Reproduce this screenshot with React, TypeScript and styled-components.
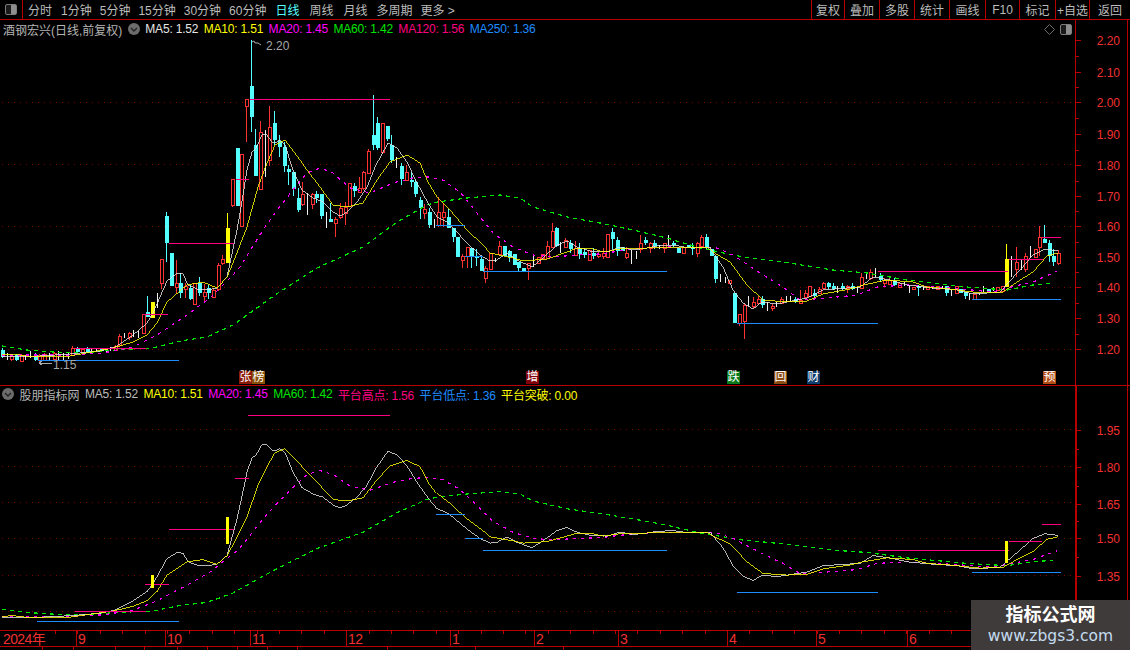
import React, {FC} from 'react';
import styled, {createGlobalStyle} from 'styled-components';

const RED = '#b80000';
const AXIS_RED = '#ff3232';
const FONT = '"Liberation Sans", "Noto Sans CJK SC", sans-serif';

const MA5 = '#e6e6e6';
const MA10 = '#ffff00';
const MA20 = '#ff00ff';
const MA60 = '#00e600';
const PINK = '#ff0080';
const BLUE = '#1e8cff';
const CYAN = '#54ffff';

type Kind = 'c' | 'r' | 'w' | 'y';
// x, kind, body top, body bottom, wick top, wick bottom (page pixels of the upper pane)
type Candle = [number, Kind, number, number, number?, number?];
type Pt = [number, number];

const candles: Candle[] = [
    [2,'c',350,357,348,358],[7,'w',353,360],[11,'r',356,359,355,361],[16,'c',355,360,354,361],[21,'r',355,361,354,362],
    [25,'w',355,360],[30,'w',351,358],[35,'c',355,360,353,361],[39,'r',355,360,354,362],[44,'r',354,360,353,361],
    [49,'w',353,360],[54,'r',353,359,352,360],[58,'w',351,360],[63,'w',353,360],[68,'w',353,359],[72,'r',348,355,346,356],
    [77,'c',348,352,347,353],[82,'r',349,352,348,353],[87,'c',348,352,347,353],[91,'w',348,352],[96,'w',348,352],
    [101,'c',349,351],[106,'w',348,352],[110,'w',347,351],[115,'r',346,350,345,351],[119,'r',336,345,334,346],
    [124,'w',333,338],[129,'r',333,337,332,340],[133,'w',330,337],[138,'w',331,338],[143,'r',314,333],
    [147,'c',312,317,296,317],[152,'y',302,318],[157,'w',293,308],[161,'r',259,283,259,289],[166,'c',216,243,212,262],
    [171,'c',253,286],[176,'r',283,287,260,293],[180,'c',283,293,273,298],[185,'r',286,289,283,298],[190,'c',288,299,285,300],
    [194,'r',283,304],[199,'c',283,293,277,296],[204,'r',292,296,284,302],[208,'c',288,293,285,299],[213,'r',290,297,288,298],
    [218,'r',265,289,263,291],[222,'r',259,263,255,265],[227,'y',228,263,213,263],[232,'r',179,205,179,207],[237,'c',148,206],
    [241,'r',154,226],[246,'r',99,106,99,142],[251,'c',86,117,40,132],[255,'c',145,176,129,176],[260,'r',132,189,121,189],
    [265,'w',130,177],[269,'r',127,160,106,166],[274,'c',123,140,111,145],[279,'c',141,147,135,157],[284,'c',147,166,142,172],
    [288,'c',169,172,165,185],[293,'c',172,189,172,196],[298,'c',198,210,188,212],[302,'r',194,204,182,206],[307,'w',193,215],
    [312,'r',194,204,193,209],[316,'c',194,198,191,203],[321,'c',194,216,194,219],[326,'w',212,228],[330,'c',219,222,203,222],
    [335,'r',219,223,217,237],[340,'r',208,217,203,219],[345,'r',207,213,202,225],[349,'r',183,206],[354,'c',186,191,183,197],
    [359,'r',188,192,177,193],[363,'r',172,188,171,190],[368,'r',151,173,149,173],[373,'c',135,145,95,150],[377,'c',123,148,117,150],
    [382,'r',123,152,123,154],[387,'c',126,139,126,141],[391,'c',145,160,135,163],[396,'w',157,168],[401,'c',166,179,163,185],
    [406,'r',172,180,165,181],[411,'c',180,182,172,187],[415,'c',182,194,179,197],[420,'c',200,208,197,219],[424,'r',209,213,204,219],
    [429,'c',212,225,208,228],[434,'w',219,228],[438,'r',212,225,197,227],[443,'r',212,217,203,227],[448,'c',217,228,209,228],
    [453,'c',228,237,228,242],[457,'c',237,257],[462,'r',256,260,254,268],[467,'r',247,256,247,268],[471,'c',248,257,248,268],
    [476,'c',257,258,249,266],[481,'c',259,271,257,271],[485,'r',268,278,266,283],[490,'r',253,269],[495,'w',258,262],
    [499,'r',246,254,241,256],[504,'c',246,256],[509,'c',251,257,250,262],[514,'c',254,265],[518,'c',262,268,262,271],
    [523,'c',268,271],[528,'r',263,268,263,280],[533,'w',254,267],[538,'r',257,263],[542,'r',254,258],[547,'r',246,258,241,258],
    [552,'r',231,247,223,247],[556,'c',228,246,227,247],[560,'w',242,253],[565,'r',240,247,238,248],[570,'c',243,249,240,253],
    [575,'r',248,255,241,255],[579,'c',248,254,243,259],[584,'c',252,255,248,258],[589,'r',250,260],[593,'c',253,256,248,259],
    [598,'r',254,256,252,258],[603,'r',253,256,248,259],[607,'r',234,257],[612,'c',232,239,228,249],[617,'c',240,251,237,256],
    [622,'c',247,251],[626,'r',253,257,247,259],[631,'w',250,264],[636,'w',251,259],[640,'r',243,249,235,253],[645,'c',240,243,237,245],
    [650,'r',243,248,242,253],[654,'c',243,246,240,249],[659,'w',245,249],[664,'r',243,248,243,253],[668,'w',235,245],
    [673,'c',243,245,241,247],[678,'c',248,253],[683,'r',247,253],[688,'c',245,248],[692,'c',247,249,243,255],[697,'r',243,253,242,257],
    [701,'r',237,246,235,248],[706,'c',237,247,234,250],[711,'c',249,256],[715,'c',256,279,256,283],[720,'w',274,282],[725,'w',277,283],
    [729,'r',280,283],[734,'c',293,323],[739,'r',314,323,314,326],[744,'r',305,321,303,339],[748,'w',296,306],[753,'r',302,306,297,308],
    [758,'r',299,303,296,305],[762,'c',299,305,296,308],[767,'w',302,311],[772,'r',306,308,304,311],[776,'w',302,307],[781,'r',299,303,297,304],
    [786,'w',296,302],[790,'w',296,302],[795,'c',299,302,297,303],[800,'r',300,303,290,304],[805,'r',293,297,290,298],[809,'r',286,296],
    [814,'c',293,296,289,298],[819,'r',289,293,287,294],[823,'r',283,288,282,289],[828,'c',283,287,282,289],[833,'c',286,289,283,290],
    [837,'w',286,293],[842,'c',286,289,283,290],[847,'r',286,288,285,293],[852,'c',286,289,283,290],[857,'w',287,293],[861,'r',277,288,273,289],
    [866,'w',272,279],[870,'r',272,278,269,280],[875,'w',268,277],[880,'c',276,280,273,282],[884,'r',280,283,278,286],[889,'r',280,284,277,285],
    [894,'c',281,285,278,286],[899,'r',283,287,282,288],[904,'w',282,286],[909,'w',286,293],[913,'r',287,289],[918,'c',286,288,285,296],
    [923,'w',287,290],[927,'r',286,289],[932,'w',286,289],[937,'r',286,289],[942,'w',286,289],[946,'c',286,293,286,296],[951,'w',289,296],
    [956,'r',286,293],[960,'c',289,293],[965,'c',292,296,292,299],[969,'w',293,300],[974,'r',294,299],[979,'w',293,295],[983,'w',286,292],
    [988,'c',289,293],[993,'w',287,291],[997,'r',287,290],[1002,'r',286,291],[1006,'y',259,287,244,287],[1011,'w',256,277],[1016,'r',262,269,247,277],
    [1021,'w',260,270],[1025,'r',256,269,253,272],[1030,'w',246,258],[1035,'r',249,257],[1039,'r',237,247,226,256],[1044,'c',239,243,225,243],
    [1049,'c',243,256,240,262],[1053,'c',256,262,249,266],[1058,'r',253,263,250,265],
];

const ma5Line: Pt[] = [[2,357],[40,356],[70,354],[100,351],[115,347],[133,335],[147,323],[153,313],[160,297],[167,281],[177,273],[183,274],[188,285],[197,289],[207,290],[217,288],[227,277],[230,263],[237,230],[241,207],[247,170],[252,152],[256,148],[262,135],[266,134],[272,142],[275,143],[280,140],[285,145],[293,170],[302,190],[313,198],[323,202],[333,212],[340,216],[347,212],[357,202],[367,187],[375,167],[388,143],[397,148],[407,162],[417,183],[428,203],[437,217],[447,222],[455,230],[467,243],[480,255],[490,261],[497,260],[507,253],[517,260],[532,267],[543,258],[557,245],[567,241],[577,247],[590,251],[607,252],[620,247],[633,250],[647,248],[657,246],[673,245],[690,248],[710,247],[713,252],[723,267],[733,290],[743,303],[753,309],[762,302],[777,304],[787,302],[807,298],[823,290],[847,288],[860,287],[873,277],[890,280],[907,285],[933,288],[957,290],[973,294],[1000,292],[1008,283],[1020,270],[1033,255],[1045,249],[1058,251]];
const ma10Line: Pt[] = [[2,355],[13,354],[33,357],[70,356],[113,348],[133,342],[147,335],[157,323],[167,302],[187,285],[203,282],[217,288],[227,277],[233,263],[247,227],[258,187],[267,163],[275,145],[285,140],[300,160],[307,170],[320,187],[333,205],[347,207],[363,203],[377,180],[390,162],[407,155],[420,163],[428,182],[437,197],[450,210],[467,230],[483,245],[490,253],[513,258],[523,261],[547,259],[567,252],[577,248],[590,248],[603,252],[620,249],[647,248],[667,247],[707,247],[713,252],[730,262],[747,285],[763,300],[787,302],[807,301],[823,294],[850,289],[863,285],[887,280],[913,282],[927,287],[950,289],[980,293],[1003,292],[1020,280],[1033,272],[1047,256],[1058,253]];
const ma20Line: Pt[] = [[2,355],[67,355],[103,353],[133,347],[157,335],[187,315],[210,298],[233,275],[240,267],[263,230],[277,210],[293,190],[307,173],[320,168],[333,173],[350,188],[370,193],[393,183],[413,178],[428,177],[443,180],[460,192],[477,213],[493,233],[513,247],[533,255],[553,257],[577,255],[600,254],[633,249],[667,247],[717,248],[733,255],[760,273],[783,287],[800,300],[827,298],[857,295],[877,287],[907,285],[950,288],[993,292],[1007,288],[1033,282],[1057,271]];
const ma60Line: Pt[] = [[2,346],[27,350],[53,352],[80,353],[117,350],[153,348],[180,341],[207,337],[233,325],[275,295],[317,268],[363,247],[397,222],[427,205],[437,202],[467,198],[500,195],[520,198],[533,207],[567,217],[600,223],[633,230],[667,238],[700,248],[743,257],[783,262],[833,270],[867,273],[907,280],[967,287],[1007,290],[1033,285],[1053,283]];

// both panes plot the same series, the lower one on a flatter scale
const toLower = (y: number) => 540 + (y - 257) * 0.78;
const lowerLine = (line: Pt[]): Pt[] => line.map(([x, y]) => [x, toLower(y)]);
const pts = (line: Pt[]) => line.map(([x, y]) => `${x},${y.toFixed(1)}`).join(' ');

type Mark = [number, number, number, string];
const upperMarks: Mark[] = [
    [250,390,99,PINK],[169,234,243,PINK],[236,249,179,PINK],[143,168,314,PINK],[75,146,348,PINK],
    [38,179,360,BLUE],[436,465,225,BLUE],[465,483,256,BLUE],[483,667,271,BLUE],[737,878,323,BLUE],
    [972,1061,299,BLUE],[878,1008,271,PINK],[1009,1043,259,PINK],[1042,1061,237,PINK],
];
const lowerMarks: Mark[] = [
    [248,390,415,PINK],[145,169,584,PINK],[169,234,529,PINK],[235,249,478,PINK],[75,146,611,PINK],
    [37,179,621,BLUE],[436,465,514,BLUE],[465,483,538,BLUE],[483,667,550,BLUE],[737,878,592,BLUE],
    [972,1061,572,BLUE],[878,1009,550,PINK],[1009,1042,541,PINK],[1042,1061,524,PINK],
];
const lowerBars: [number, number, number][] = [[152,575,588],[227,517,544],[1006,541,563]];

const upperGrid = [102,164,226,287,349];
const lowerGrid = [429,466,502,538,575,611];

const upperPrices: [string, number][] = [['2.20',40],['2.10',72],['2.00',102],['1.90',134],['1.80',165],['1.70',196],['1.60',226],['1.50',257],['1.40',287],['1.30',318],['1.20',349]];
const lowerPrices: [string, number][] = [['1.95',430],['1.80',467],['1.65',504],['1.50',538],['1.35',576]];

const months: [string, number][] = [['2024年',3],['9',78],['10',167],['11',252],['12',348],['1',452],['2',536],['3',620],['4',729],['5',818],['6',909]];

const periods: {label: string; gap: number; active?: boolean}[] = [
    {label: '分时', gap: 0},
    {label: '1分钟', gap: 9},
    {label: '5分钟', gap: 8},
    {label: '15分钟', gap: 8},
    {label: '30分钟', gap: 8},
    {label: '60分钟', gap: 8},
    {label: '日线', gap: 9, active: true},
    {label: '周线', gap: 10},
    {label: '月线', gap: 10},
    {label: '多周期', gap: 9},
    {label: '更多 >', gap: 8},
];

const actions: [string, number][] = [['复权',33],['叠加',35],['多股',35],['统计',35],['画线',36],['F10',34],['标记',36],['+自选',34],['返回',41]];

const tags: {text: string; left: number; bg: string}[] = [
    {text: '张', left: 239, bg: '#8c1a08'},
    {text: '榜', left: 252, bg: '#8a5208'},
    {text: '增', left: 526, bg: '#820008'},
    {text: '跌', left: 727, bg: '#0c7a1c'},
    {text: '回', left: 774, bg: '#8a4c12'},
    {text: '财', left: 807, bg: '#0e3c6c'},
    {text: '预', left: 1043, bg: '#b04c14'},
];

const GlobalStyle = createGlobalStyle`
    html, body {
        margin: 0;
        background: #000;
        overflow: hidden;
    }
`;

const Page = styled.div`
    position: relative;
    width: 1130px;
    height: 650px;
    display: flex;
    flex-direction: column;
    background: #000;
    color: #bcbcbc;
    font-family: ${FONT};
    font-size: 12px;
    overflow: hidden;
`;

const Toolbar = styled.div`
    flex: none;
    height: 19px;
    display: flex;
    align-items: stretch;
    border-bottom: 1px solid ${RED};
`;

const PanelButton = styled.div`
    width: 23px;
    box-sizing: border-box;
    display: flex;
    align-items: center;
    justify-content: center;
    border-right: 1px solid ${RED};
`;

const PanelIcon = styled.span`
    display: block;
    width: 12px;
    height: 11px;
    box-sizing: border-box;
    border: 1px solid #7c7c7c;
    border-radius: 2px;
    background: linear-gradient(90deg, #1a1a1a 55%, #8e8e8e 55%);
`;

const PeriodList = styled.div`
    flex: 1;
    display: flex;
    align-items: center;
    padding-left: 5px;
`;

const Period = styled.span<{$gap: number; $active?: boolean}>`
    margin-left: ${p => p.$gap}px;
    color: ${p => (p.$active ? CYAN : '#bcbcbc')};
    white-space: nowrap;
`;

const ActionList = styled.div`
    display: flex;
    align-items: stretch;
`;

const ActionButton = styled.div<{$width: number}>`
    width: ${p => p.$width}px;
    box-sizing: border-box;
    display: flex;
    align-items: center;
    justify-content: center;
    border-left: 1px solid ${RED};
    white-space: nowrap;
`;

const Pane = styled.div<{$height: number; $ruled?: boolean}>`
    flex: none;
    height: ${p => p.$height}px;
    display: flex;
    border-bottom: ${p => (p.$ruled ? `1px solid ${RED}` : 'none')};
`;

const Plot = styled.div`
    position: relative;
    flex: none;
    width: 1075px;
`;

const Rail = styled.div<{$thick?: boolean}>`
    flex: none;
    width: 53px;
    box-sizing: border-box;
    border-left: ${p => (p.$thick ? 2 : 1)}px solid ${RED};
    border-right: 1px solid ${RED};
`;

const ChartSvg = styled.svg`
    display: block;
    width: 100%;
    height: 100%;
`;

const AxisLabel = styled.text`
    fill: #f03030;
    font-family: ${FONT};
    font-size: 12px;
    text-anchor: end;
`;

const PointLabel = styled.text`
    fill: #a8a8a8;
    font-family: ${FONT};
    font-size: 12px;
`;

const Legend = styled.div<{$left: number; $height: number}>`
    position: absolute;
    top: 0;
    left: ${p => p.$left}px;
    height: ${p => p.$height}px;
    display: flex;
    align-items: center;
    gap: 5.5px;
    white-space: nowrap;
    letter-spacing: -0.2px;
`;

const LegendItem = styled.span<{$color: string}>`
    color: ${p => p.$color};
`;

const LegendTitle = styled.span`
    color: #b4b4b4;
    letter-spacing: 0;
`;

const ChevronDot = styled.svg`
    display: block;
    flex: none;
    width: 12px;
    height: 12px;
`;

const CornerTools = styled.div`
    position: absolute;
    top: 4px;
    right: 3px;
    display: flex;
    align-items: center;
    gap: 5px;
`;

const Tag = styled.span<{$bg: string; $left: number}>`
    position: absolute;
    top: 351px;
    left: ${p => p.$left}px;
    width: 13px;
    height: 13px;
    display: flex;
    align-items: center;
    justify-content: center;
    background: ${p => p.$bg};
    color: #fff;
    font-size: 12px;
    line-height: 13px;
`;

const TimeAxis = styled.div`
    flex: none;
    height: 15px;
    border-top: 1px solid ${RED};
    border-bottom: 1px solid ${RED};
`;

const MonthLabel = styled.text`
    fill: #f03030;
    font-family: ${FONT};
    font-size: 14px;
    letter-spacing: -0.6px;
`;

const BottomStrip = styled.div`
    flex: 1;
    display: flex;
`;

const StripTab = styled.span<{$width: number}>`
    width: ${p => p.$width}px;
    box-sizing: border-box;
    border-right: 1px solid ${RED};
`;

const Watermark = styled.div`
    position: absolute;
    right: 0;
    bottom: 0;
    width: 159px;
    height: 50px;
    display: flex;
    flex-direction: column;
    align-items: center;
    justify-content: center;
    gap: 1px;
    background: #3f3b3a;
`;

const WatermarkTitle = styled.div`
    color: #fff;
    font-size: 18px;
    font-weight: 700;
    line-height: 22px;
`;

const WatermarkUrl = styled.div`
    color: #c4dcf0;
    font-family: "DejaVu Sans", sans-serif;
    font-size: 15.5px;
    line-height: 19px;
`;

const Chevron: FC = () => (
    <ChevronDot viewBox="0 0 12 12">
        <circle cx="6" cy="6" r="6" fill="#6c6c6c"/>
        <path d="M3 5l3 3 3-3" fill="none" stroke="#222" strokeWidth="1.4"/>
    </ChevronDot>
);

const Candles: FC = () => (
    <g shapeRendering="crispEdges">
        {candles.map(([x, kind, top, bottom, wickTop, wickBottom]) => {
            const wt = wickTop ?? top;
            const wb = wickBottom ?? bottom;
            const color = kind === 'c' ? CYAN : kind === 'r' ? AXIS_RED : kind === 'y' ? '#ffff00' : '#f0f0f0';
            if (kind === 'w') {
                return <line key={x} x1={x + 0.5} x2={x + 0.5} y1={top} y2={bottom} stroke={color}/>;
            }
            return <g key={x}>
                <line x1={x + 0.5} x2={x + 0.5} y1={wt} y2={wb} stroke={color}/>
                {kind === 'r'
                    ? <rect x={x - 1} y={top} width={3} height={bottom - top} fill="#000" stroke={color}/>
                    : <rect x={x - 1} y={top} width={4} height={bottom - top} fill={color}/>}
            </g>;
        })}
    </g>
);

const Averages: FC<{a: Pt[]; b: Pt[]; c: Pt[]; d: Pt[]}> = ({a, b, c, d}) => (
    <g fill="none" shapeRendering="crispEdges">
        <polyline points={pts(d)} stroke={MA60} strokeWidth={1.2} strokeDasharray="4 4"/>
        <polyline points={pts(c)} stroke={MA20} strokeWidth={1.2} strokeDasharray="3 5"/>
        <polyline points={pts(a)} stroke={MA5} strokeWidth={0.8}/>
        <polyline points={pts(b)} stroke={MA10} strokeWidth={0.8}/>
    </g>
);

const Grid: FC<{rows: number[]}> = ({rows}) => (
    <g stroke="#7a0000" strokeDasharray="1 5" shapeRendering="crispEdges">
        {rows.map(y => <line key={y} x1={2} x2={1075} y1={y + 0.5} y2={y + 0.5}/>)}
    </g>
);

const Marks: FC<{items: Mark[]}> = ({items}) => (
    <g shapeRendering="crispEdges">
        {items.map(([x1, x2, y, color]) => <line key={`${x1}-${y}`} x1={x1} x2={x2} y1={y + 0.5} y2={y + 0.5} stroke={color}/>)}
    </g>
);

const PriceAxis: FC<{prices: [string, number][]; originY: number; height: number; thick?: boolean}> = ({prices, originY, height, thick}) => {
    const originX = thick ? 1077 : 1076;
    return (
        <Rail $thick={thick}>
            <ChartSvg viewBox={`${originX} ${originY} 50 ${height}`} preserveAspectRatio="xMinYMin">
                <g stroke={RED} shapeRendering="crispEdges">
                    {prices.map(([label, y]) => <line key={label} x1={originX} x2={1081} y1={y + 0.5} y2={y + 0.5}/>)}
                    {prices.slice(1).map(([label, y], i) => {
                        const mid = Math.round((y + prices[i][1]) / 2);
                        return <line key={label} x1={originX} x2={1079} y1={mid + 0.5} y2={mid + 0.5}/>;
                    })}
                </g>
                {prices.map(([label, y]) => <AxisLabel key={label} x={1120} y={y + 4.5}>{label}</AxisLabel>)}
            </ChartSvg>
        </Rail>
    );
};

const App: FC = () => {
    const minorTicks: number[] = [];
    for (let x = 55; x < 1075; x += 22.4) minorTicks.push(Math.round(x));

    return (
        <Page>
            <GlobalStyle/>
            <Toolbar>
                <PanelButton><PanelIcon/></PanelButton>
                <PeriodList>
                    {periods.map(p => <Period key={p.label} $gap={p.gap} $active={p.active}>{p.label}</Period>)}
                </PeriodList>
                <ActionList>
                    {actions.map(([label, width]) => <ActionButton key={label} $width={width}>{label}</ActionButton>)}
                </ActionList>
            </Toolbar>

            <Pane $height={365} $ruled>
                <Plot>
                    <ChartSvg viewBox="0 20 1075 365" preserveAspectRatio="xMinYMin">
                        <Grid rows={upperGrid}/>
                        <Candles/>
                        <Averages a={ma5Line} b={ma10Line} c={ma20Line} d={ma60Line}/>
                        <Marks items={upperMarks}/>
                        <path d="M252 42l2 -1 1 2h3l3 2" fill="none" stroke="#a8a8a8"/>
                        <PointLabel x={266} y={50}>2.20</PointLabel>
                        <path d="M39 363h13M39 363l3 -2M39 363l3 2" fill="none" stroke="#a8a8a8" shapeRendering="crispEdges"/>
                        <PointLabel x={53} y={369}>1.15</PointLabel>
                    </ChartSvg>
                    <Legend $left={3} $height={18}>
                        <LegendTitle>酒钢宏兴(日线,前复权)</LegendTitle>
                        <Chevron/>
                        <LegendItem $color={MA5}>MA5: 1.52</LegendItem>
                        <LegendItem $color={MA10}>MA10: 1.51</LegendItem>
                        <LegendItem $color={MA20}>MA20: 1.45</LegendItem>
                        <LegendItem $color={MA60}>MA60: 1.42</LegendItem>
                        <LegendItem $color={PINK}>MA120: 1.56</LegendItem>
                        <LegendItem $color={BLUE}>MA250: 1.36</LegendItem>
                    </Legend>
                    <CornerTools>
                        <svg width="11" height="11" viewBox="0 0 11 11">
                            <path d="M5.5 .5l5 5-5 5-5-5z" fill="none" stroke="#6c6c6c"/>
                        </svg>
                        <PanelIcon/>
                    </CornerTools>
                    {tags.map(t => <Tag key={t.text} $left={t.left} $bg={t.bg}>{t.text}</Tag>)}
                </Plot>
                <PriceAxis prices={upperPrices} originY={20} height={365}/>
            </Pane>

            <Pane $height={244}>
                <Plot>
                    <ChartSvg viewBox="0 386 1075 244" preserveAspectRatio="xMinYMin">
                        <Grid rows={lowerGrid}/>
                        <Averages a={lowerLine(ma5Line)} b={lowerLine(ma10Line)} c={lowerLine(ma20Line)} d={lowerLine(ma60Line)}/>
                        <Marks items={lowerMarks}/>
                        <g fill="#ffff00" shapeRendering="crispEdges">
                            {lowerBars.map(([x, y1, y2]) => <rect key={x} x={x - 1} y={y1} width={3} height={y2 - y1}/>)}
                        </g>
                    </ChartSvg>
                    <Legend $left={2} $height={16}>
                        <Chevron/>
                        <LegendTitle>股朋指标网</LegendTitle>
                        <LegendItem $color="#bcbcbc">MA5: 1.52</LegendItem>
                        <LegendItem $color={MA10}>MA10: 1.51</LegendItem>
                        <LegendItem $color={MA20}>MA20: 1.45</LegendItem>
                        <LegendItem $color={MA60}>MA60: 1.42</LegendItem>
                        <LegendItem $color={PINK}>平台高点: 1.56</LegendItem>
                        <LegendItem $color={BLUE}>平台低点: 1.36</LegendItem>
                        <LegendItem $color={MA10}>平台突破: 0.00</LegendItem>
                    </Legend>
                </Plot>
                <PriceAxis prices={lowerPrices} originY={386} height={244} thick/>
            </Pane>

            <TimeAxis>
                <ChartSvg viewBox="0 631 1130 15" preserveAspectRatio="xMinYMin">
                    <g stroke={RED} shapeRendering="crispEdges">
                        {minorTicks.map(x => <line key={x} x1={x + 0.5} x2={x + 0.5} y1={631} y2={634}/>)}
                        {months.slice(1).map(([m, x]) => <line key={m} x1={x - 1.5} x2={x - 1.5} y1={631} y2={646}/>)}
                    </g>
                    {months.map(([m, x]) => <MonthLabel key={m} x={x} y={644}>{m}</MonthLabel>)}
                </ChartSvg>
            </TimeAxis>

            <BottomStrip>
                {[43,31,42,29,33,30,30,30,30,90,88,88].map((w, i) => <StripTab key={i} $width={w}/>)}
            </BottomStrip>

            <Watermark>
                <WatermarkTitle>指标公式网</WatermarkTitle>
                <WatermarkUrl>www.zbgs3.com</WatermarkUrl>
            </Watermark>
        </Page>
    );
};

export default App;
